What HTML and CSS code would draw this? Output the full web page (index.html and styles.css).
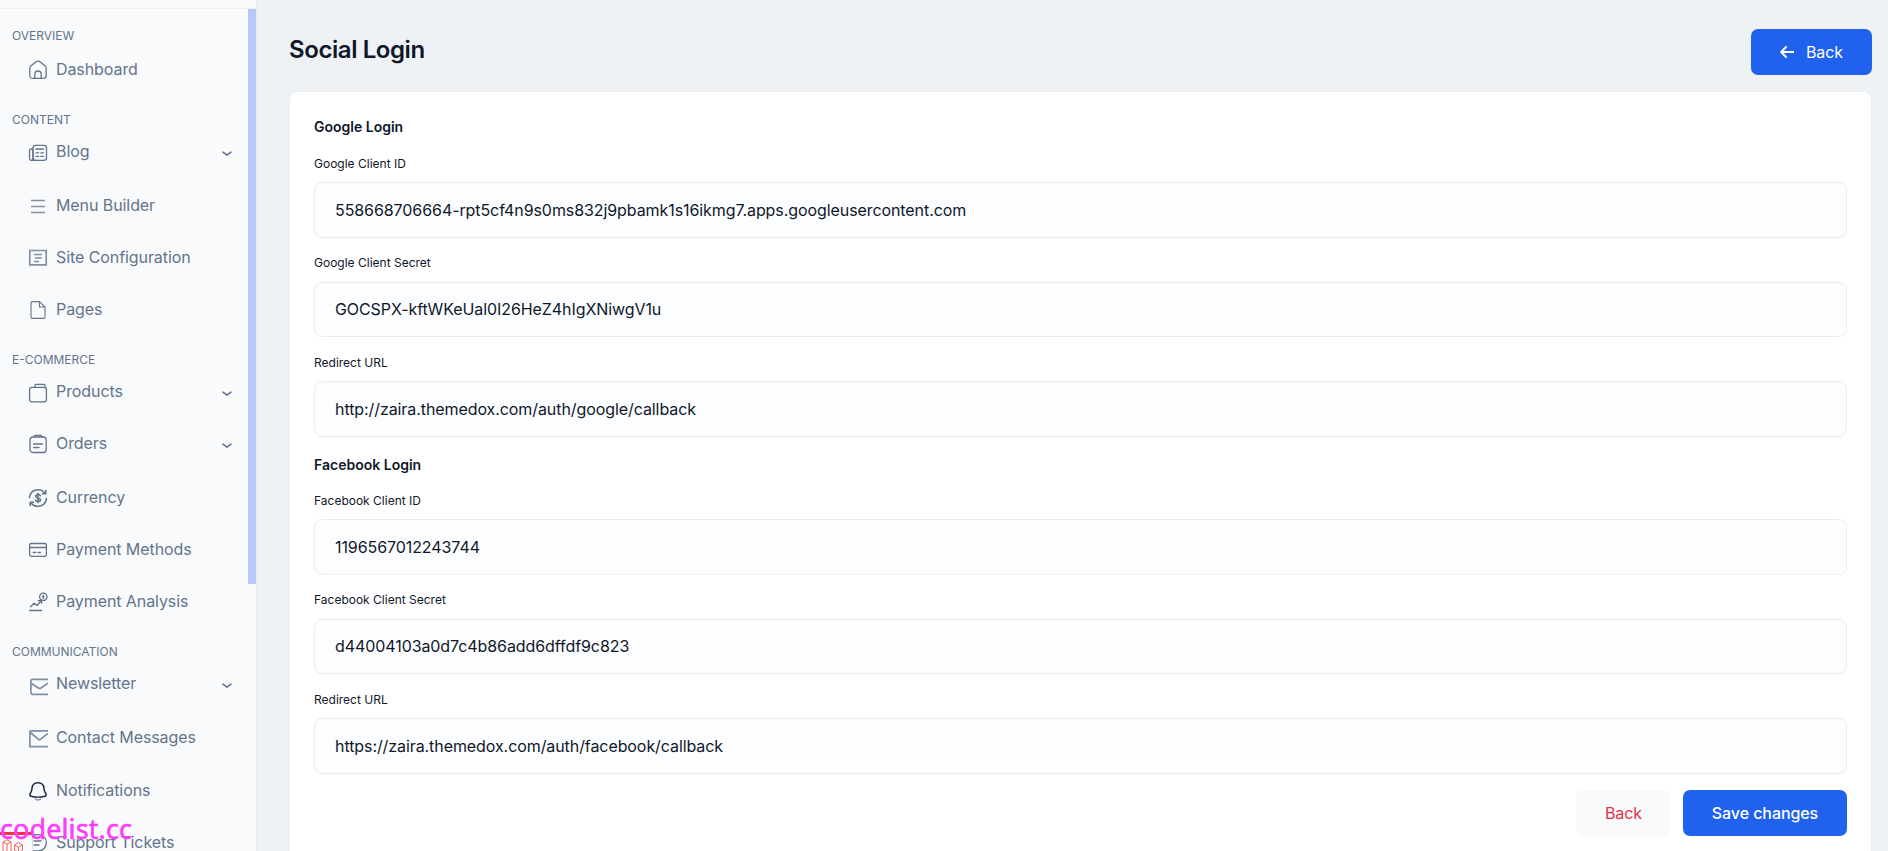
FILE: index.html
```html
<!DOCTYPE html>
<html lang="en">
<head>
  <meta charset="UTF-8">
  <meta name="viewport" content="width=device-width, initial-scale=1.0">
  <title>Social Login</title>
  <link rel="stylesheet" href="styles.css">
</head>
<body>
  <div class="layout">
    <aside class="sidebar">
      <div class="sidebar-top"></div>
      <nav class="sidebar-nav">
        <h6 class="nav-label first">OVERVIEW</h6>
        <ul>
          <li><a href="#">
            <svg class="icon" viewBox="0 0 20 20"><path d="M1.800 8.400c0-1.200.4-2 1.300-2.700l4.600-3.700c1.400-1.100 3.200-1.100 4.600 0l4.600 3.700c.9.7 1.300 1.500 1.300 2.700v7.100c0 1.900-1 2.900-2.900 2.900H4.700c-1.900 0-2.900-1-2.900-2.900z"/><path d="M6.800 18v-3.800a3.200 3.200 0 0 1 6.400 0V18"/></svg>
            <span>Dashboard</span></a></li>
        </ul>

        <h6 class="nav-label">CONTENT</h6>
        <ul>
          <li class="has-sub"><a href="#">
            <svg class="icon low" viewBox="0 0 20 20"><rect x="5" y="2.300" width="13.500" height="15" rx="2.500"/><path d="M5 6H3.500C2.200 6 1.500 6.800 1.500 8v7.100c0 1.500.8 2.200 2 2.200h4M5 6v9.500c0 1.100-.6 1.800-1.500 1.800M8 6h7.500M8 9.800h2.700M12.800 9.800h2.700M8 13.300h2.700M12.800 13.300h2.700"/></svg>
            <span>Blog</span>
            <svg class="chevron" viewBox="0 0 10 6"><path d="M1 1.200l4 3 4-3"/></svg></a></li>
          <li><a href="#">
            <svg class="icon low light square" viewBox="0 0 20 20"><path d="M3 3.500h14M3 9.500h14M3 15.500h14"/></svg>
            <span>Menu Builder</span></a></li>
          <li><a href="#">
            <svg class="icon light square" viewBox="0 0 20 20"><path d="M1.800 2.500h16.400v14.300H1.800zM6 6.500h8M7 10h7M6 13.500h5"/></svg>
            <span>Site Configuration</span></a></li>
          <li><a href="#">
            <svg class="icon thin" viewBox="0 0 20 20"><path d="M11.500 1.600H4.500C3.500 1.600 3 2.200 3 3v14c0 .9.500 1.400 1.400 1.400h11.200c.9 0 1.400-.5 1.400-1.400V7zM11.500 1.600V7H17"/></svg>
            <span>Pages</span></a></li>
        </ul>

        <h6 class="nav-label">E-COMMERCE</h6>
        <ul>
          <li class="has-sub"><a href="#">
            <svg class="icon low" viewBox="0 0 20 20"><rect x="1.600" y="4.300" width="16.800" height="14.600" rx="2.500"/><path d="M7 4.300V2.500c0-.7.300-1.200 1-1.200h8c.7 0 1 .5 1 1.200v2"/></svg>
            <span>Products</span>
            <svg class="chevron" viewBox="0 0 10 6"><path d="M1 1.200l4 3 4-3"/></svg></a></li>
          <li class="has-sub"><a href="#">
            <svg class="icon" viewBox="0 0 20 20"><rect x="2" y="3" width="16.200" height="15.500" rx="3"/><path d="M5.500 3c.5-1 1-1.500 2-1.500h5c1 0 1.500.5 2 1.500M5.500 10h9M5.500 13.500h5.500"/></svg>
            <span>Orders</span>
            <svg class="chevron" viewBox="0 0 10 6"><path d="M1 1.200l4 3 4-3"/></svg></a></li>
          <li><a href="#">
            <svg class="icon bold" viewBox="0 0 20 20"><path d="M1.500 9.500C1.700 5 5.500 1.700 10 1.700c3 0 5.500 1.500 7 3.600M18.500 10.500c-.2 4.500-4 7.800-8.500 7.800-3 0-5.500-1.500-7-3.600M17.800 2.500v3.300h-3.300M2.200 17.500v-3.300h3.300M12.400 7.800c-.3-.9-1.200-1.300-2.400-1.300-1.300 0-2.300.5-2.300 1.700 0 2.600 4.800 1 4.800 3.600 0 1.200-1.100 1.700-2.500 1.700-1.300 0-2.300-.5-2.600-1.400M10 5.300v9.400"/></svg>
            <span>Currency</span></a></li>
          <li><a href="#">
            <svg class="icon" viewBox="0 0 20 20"><rect x="1.600" y="3.500" width="16.800" height="12.800" rx="1.800"/><path d="M1.600 7.500h16.800M5.200 12.500h2.600M10 12.500h2.400"/></svg>
            <span>Payment Methods</span></a></li>
          <li><a href="#">
            <svg class="icon" viewBox="0 0 20 20"><path d="M1.500 18.500h12.200M2.500 14.800l3.700-3.500 3 2.200 4-5M10.200 8.700l3-.4.400 3.100"/><circle cx="15.300" cy="4.800" r="3.700"/><path d="M15.300 3.300v3M14.500 4.800h1.600"/></svg>
            <span>Payment Analysis</span></a></li>
        </ul>

        <h6 class="nav-label">COMMUNICATION</h6>
        <ul>
          <li class="has-sub"><a href="#">
            <svg class="icon lower light" viewBox="0 0 20 20"><path d="M20 2.400H4.500c-1.100 0-1.600.5-1.600 1.600v11.800c0 1.100.5 1.600 1.600 1.600H20M3.200 6.200l7.300 4.800c.9.6 1.600.6 2.500 0l7-4.800"/></svg>
            <span>Newsletter</span>
            <svg class="chevron" viewBox="0 0 10 6"><path d="M1 1.200l4 3 4-3"/></svg></a></li>
          <li><a href="#">
            <svg class="icon low light square" viewBox="0 0 20 20"><path d="M20 1.800H3.300c-.9 0-1.400.5-1.400 1.400v14.400H20M2.300 3.500l8.400 7 .8.300.8-.3L20 4.500"/></svg>
            <span>Contact Messages</span></a></li>
          <li class="shift"><a href="#">
            <svg class="icon dark" viewBox="0 0 20 20"><path d="M4 7.500C4.200 4 6.500 1.700 10 1.700S15.800 4 16 7.500c.1 2.200.5 3 1.500 4.500 1.300 1.900.7 3.200-1.500 3.600-4 .7-8 .7-12 0-2.200-.4-2.800-1.700-1.500-3.600 1-1.500 1.400-2.300 1.500-4.500z"/><path class="muted" d="M7.500 18c1.300 1.200 3.700 1.200 5 0"/></svg>
            <span>Notifications</span></a></li>
          <li><a href="#">
            <svg class="icon" viewBox="0 0 20 20"><path d="M2 1.600h8.500c4.500 0 7.900 3.300 7.900 8s-3.400 8.200-7.900 8.200H2M6 8h7M6 12h5"/></svg>
            <span>Support Tickets</span></a></li>
        </ul>
      </nav>
      <div class="scroll-thumb"></div>
    </aside>

    <main class="content">
      <header class="page-header">
        <h1>Social Login</h1>
        <a class="btn btn-primary btn-top" href="#">
          <svg class="arrow" viewBox="0 0 14 12"><path d="M13.500 6H1.500M6 1L1.200 6 6 11"/></svg>
          Back
        </a>
      </header>

      <form class="card">
        <h2>Google Login</h2>
        <label for="google-id">Google Client ID</label>
        <input type="text" id="google-id" value="558668706664-rpt5cf4n9s0ms832j9pbamk1s16ikmg7.apps.googleusercontent.com">
        <label for="google-secret">Google Client Secret</label>
        <input type="text" id="google-secret" value="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">
        <label for="google-url">Redirect URL</label>
        <input type="text" id="google-url" value="http://zaira.themedox.com/auth/google/callback">

        <h2 class="next">Facebook Login</h2>
        <label for="facebook-id">Facebook Client ID</label>
        <input type="text" id="facebook-id" value="1196567012243744">
        <label for="facebook-secret">Facebook Client Secret</label>
        <input type="text" id="facebook-secret" value="d44004103a0d7c4b86add6dffdf9c823">
        <label for="facebook-url">Redirect URL</label>
        <input type="text" id="facebook-url" value="https://zaira.themedox.com/auth/facebook/callback">

        <div class="form-actions">
          <a class="btn btn-light" href="#">Back</a>
          <button class="btn btn-primary btn-save" type="submit">Save changes</button>
        </div>
      </form>
    </main>
  </div>

  <div class="debugbar">
    <svg viewBox="0 0 22 14"><path d="M1 3l4-2.300L9 3v9M1 3v11M1 3l4 2.200L9 3M5 5.200V14M9 12l4 1.500M12.500 6l4-2.500 4 2.500v5l-4 2.500-4-2.500zM12.500 6l4 2.300 4-2.300M16.500 8.300V13"/></svg>
  </div>
  <div class="watermark">codelist.cc</div>
</body>
</html>
```

FILE: styles.css
```css
* {
  box-sizing: border-box;
}

body {
  margin: 0;
  height: 100vh;
  overflow: hidden;
  font-family: Inter, sans-serif;
  background-color: #eef2f5;
  color: #0f172a;
}

a {
  text-decoration: none;
}

.layout {
  display: flex;
  height: 100vh;
}

/* sidebar */
.sidebar {
  position: relative;
  flex: none;
  width: 256px;
  height: 100vh;
  overflow: hidden;
  background-color: #f8fafc;
}

.sidebar-top {
  height: 9px;
  border-bottom: 1px solid #e9edf0;
}

.sidebar-nav {
  padding: 21px 20px 0 12px;
}

.scroll-thumb {
  position: absolute;
  top: 9px;
  right: 0;
  width: 8px;
  height: 575px;
  background-color: #b6caf8;
}

.nav-label {
  margin: 18px 0 0;
  font-size: 12px;
  font-weight: 400;
  line-height: 12px;
  color: #64748b;
}

.nav-label.first {
  margin: 0 0 2px;
}

.sidebar ul {
  list-style: none;
  margin: 0;
  padding: 0;
}

.sidebar li a {
  display: flex;
  align-items: center;
  height: 52px;
  padding-left: 16px;
  font-size: 16px;
  letter-spacing: -0.08px;
  color: #64748b;
}

.sidebar li span {
  padding-bottom: 2px;
}

.has-sub + li:not(.has-sub) {
  margin-top: 2px;
}

.shift {
  margin-top: 1px;
}

.icon {
  width: 20px;
  height: 20px;
  margin-right: 8px;
  fill: none;
  stroke: #64748b;
  stroke-width: 1.3;
  stroke-linecap: round;
  stroke-linejoin: round;
}

.icon.low {
  margin-top: 2px;
}

.icon.lower {
  margin-top: 6px;
}

.icon.light {
  stroke: #8090a7;
  stroke-width: 1.7;
}

.icon.square {
  stroke-linecap: butt;
  stroke-linejoin: miter;
}

.icon.thin {
  stroke-width: 1.1;
}

.icon.bold {
  stroke-width: 1.6;
}

.icon.dark {
  stroke: #1c2545;
  stroke-width: 1.5;
}

.icon .muted {
  stroke: #8090a7;
}

.chevron {
  width: 10px;
  height: 6px;
  margin: 3px 4px 0 auto;
  fill: none;
  stroke: #64748b;
  stroke-width: 1.6;
  stroke-linecap: round;
  stroke-linejoin: round;
}

/* content */
.content {
  flex: 1;
  padding: 29px 16px 0 33px;
  border-left: 1px solid #e9edf0;
}

.page-header {
  display: flex;
  justify-content: space-between;
  height: 62px;
  margin-left: -1px;
}

h1 {
  margin: 0;
  font-size: 24px;
  font-weight: 600;
  line-height: 42px;
  letter-spacing: -0.42px;
}

.btn {
  display: flex;
  align-items: center;
  justify-content: center;
  height: 46px;
  border: none;
  border-radius: 7px;
  font-family: inherit;
  font-size: 16px;
  letter-spacing: -0.08px;
}

.btn-primary {
  background-color: #2062ee;
  color: #fff;
}

.btn-top {
  width: 121px;
}

.btn-light {
  width: 95px;
  background-color: #f8fafc;
  color: #e13348;
}

.btn-save {
  width: 164px;
  font-weight: 500;
}

.arrow {
  width: 14px;
  height: 12px;
  margin-right: 12px;
  fill: none;
  stroke: #fff;
  stroke-width: 2;
  stroke-linecap: round;
  stroke-linejoin: round;
}

.card {
  height: 800px;
  margin-left: -1px;
  padding: 23.4px 24px;
  background-color: #fff;
  border: 1px solid #e9edf0;
  border-radius: 8px;
}

h2 {
  margin: 0 0 14.3px;
  font-size: 14px;
  font-weight: 600;
  line-height: 24px;
}

h2.next {
  margin-bottom: 13.4px;
  padding-top: 1px;
}

label {
  display: block;
  margin-bottom: 8.3px;
  font-size: 12px;
  line-height: 20px;
}

input {
  display: block;
  width: 100%;
  height: 55.6px;
  margin-bottom: 15.7px;
  padding: 0 20px;
  border: 1px solid #e9edf2;
  border-radius: 8px;
  background-color: #fcfdff;
  color: #0f172a;
  font-family: inherit;
  font-size: 16px;
  letter-spacing: -0.08px;
}

.form-actions {
  display: flex;
  justify-content: flex-end;
  gap: 12px;
  padding-top: 0.4px;
}

/* overlays */
.debugbar {
  position: fixed;
  left: 0;
  bottom: 0;
  width: 33px;
  height: 19px;
  padding: 4px 0 0 2px;
  background-color: #f8fafc;
  border-top: 3px solid #f4343c;
  border-right: 1px solid #ddd;
}

.debugbar svg {
  display: block;
  width: 22px;
  height: 14px;
  fill: none;
  stroke: #f4645f;
  stroke-width: 1;
}

.watermark {
  position: fixed;
  left: 0;
  bottom: 4px;
  font-family: "Noto Sans", sans-serif;
  font-size: 27px;
  line-height: 36px;
  letter-spacing: 0.1px;
  color: #ff3cff;
  -webkit-text-stroke: 0.6px #ff3cff;
}
```
